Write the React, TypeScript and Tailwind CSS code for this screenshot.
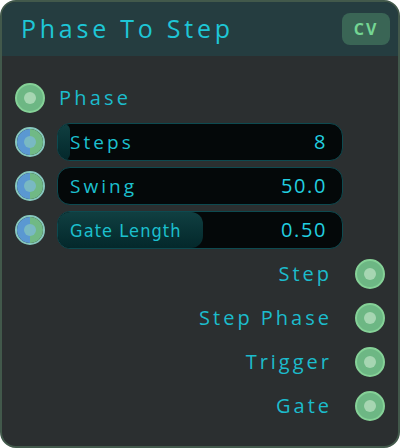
import type { ReactNode } from "react";

const font = { fontFamily: '"Open Sans", "Liberation Sans", sans-serif' };

function InJack() {
  return (
    <div className="relative h-[30px] w-[30px] shrink-0 overflow-hidden rounded-full border-2 border-[#86c7bd]">
      <div className="absolute inset-0 flex">
        <div className="h-full w-1/2 bg-[#5a98d2]" />
        <div className="h-full w-1/2 bg-[#70b985]" />
      </div>
      <div className="absolute left-1/2 top-1/2 h-[12px] w-[12px] -translate-x-1/2 -translate-y-1/2 rounded-full bg-[#79b9c3]" />
    </div>
  );
}

function Jack() {
  return (
    <div className="relative flex h-[30px] w-[30px] shrink-0 items-center justify-center rounded-full border-2 border-[#85d197] bg-[#6db784]">
      <div className="h-[12px] w-[12px] rounded-full bg-[#a6d6b2]" />
    </div>
  );
}

function Slider({
  label,
  value,
  fill,
  narrow,
}: {
  label: string;
  value: string;
  fill: number;
  narrow?: boolean;
}) {
  return (
    <div className="relative flex h-[38px] flex-1 items-center justify-between overflow-hidden rounded-[13px] border border-[#0d4a50] bg-[#040809] pl-[12px] pr-[15px]">
      <div
        className="absolute bottom-0 left-0 top-0 rounded-[12px] bg-gradient-to-b from-[#103f41] to-[#04282b]"
        style={{ width: `${fill}px` }}
      />
      <span
        className={
          narrow
            ? "relative text-[18px] tracking-[0.06em] text-[#1cc0cf]"
            : "relative text-[19px] tracking-[0.16em] text-[#1cc0cf]"
        }
        style={narrow ? { fontFamily: '"DejaVu Sans Condensed", "DejaVu Sans", sans-serif' } : font}
      >
        {label}
      </span>
      <span className="relative text-[20px] tracking-[0.08em] text-[#22cfe0]" style={font}>
        {value}
      </span>
    </div>
  );
}

function Row({ children }: { children: ReactNode }) {
  return <div className="flex h-[38px] items-center gap-[12px]">{children}</div>;
}

export default function App() {
  return (
    <div className="h-[448px] w-[400px] bg-white">
      <div className="flex h-[448px] w-[400px] flex-col overflow-hidden rounded-[16px] border-2 border-[#42594b] bg-[#2b2f30]">
        <div className="flex h-[54px] shrink-0 items-center justify-between bg-[#253d40] pl-[19px] pr-[8px]">
          <span className="text-[25px] tracking-[0.15em] text-[#1ec6d6]" style={font}>
            Phase To Step
          </span>
          <div className="flex h-[32px] w-[48px] items-center justify-center rounded-[8px] bg-[#3a6555]">
            <span className="text-[16px] font-bold tracking-[0.12em] text-[#74d593]" style={font}>
              CV
            </span>
          </div>
        </div>
        <div className="flex flex-col gap-[6px] px-[13px] pt-[23px]">
          <Row>
            <Jack />
            <span className="ml-[2px] text-[20px] tracking-[0.16em] text-[#1cbccc]" style={font}>
              Phase
            </span>
          </Row>
          <Row>
            <InJack />
            <Slider label="Steps" value="8" fill={12} />
            <div className="w-[30px] shrink-0" />
          </Row>
          <Row>
            <InJack />
            <Slider label="Swing" value="50.0" fill={0} />
            <div className="w-[30px] shrink-0" />
          </Row>
          <Row>
            <InJack />
            <Slider label="Gate Length" value="0.50" fill={145} narrow />
            <div className="w-[30px] shrink-0" />
          </Row>
          {["Step", "Step Phase", "Trigger", "Gate"].map((l) => (
            <div key={l} className="flex h-[38px] items-center justify-end gap-[23px]">
              <span className="text-[20px] tracking-[0.15em] text-[#1cbccc]" style={font}>
                {l}
              </span>
              <Jack />
            </div>
          ))}
        </div>
      </div>
    </div>
  );
}
